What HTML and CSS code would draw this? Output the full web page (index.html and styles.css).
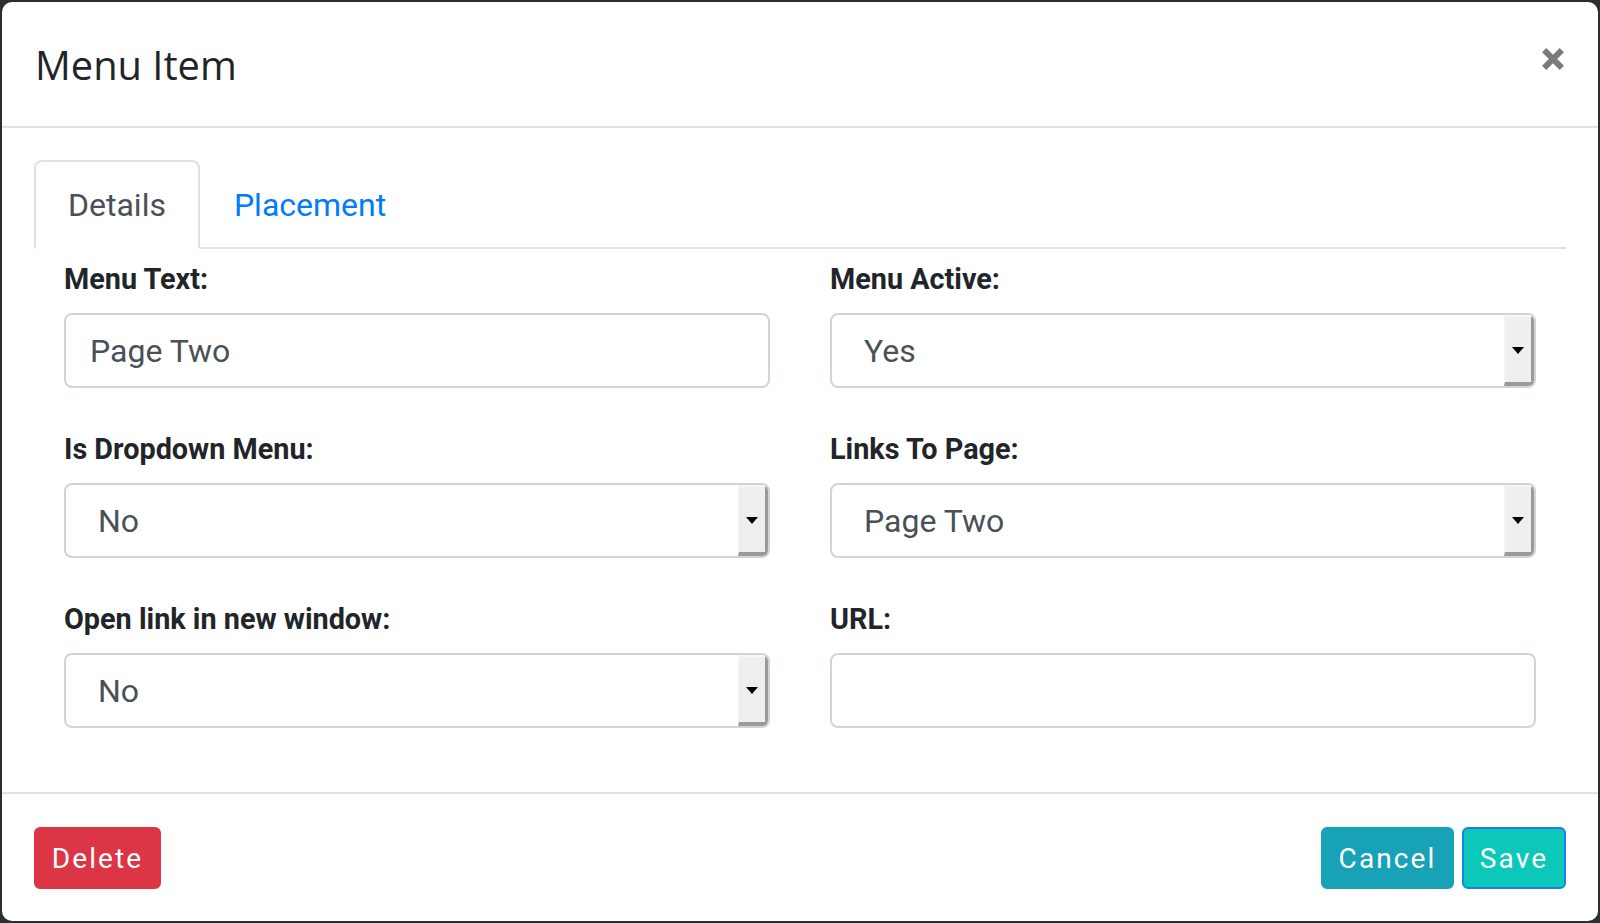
FILE: index.html
```html
<!DOCTYPE html>
<html lang="en">
<head>
<meta charset="utf-8">
<title>Menu Item</title>
<link rel="stylesheet" href="styles.css">
</head>
<body>
<div class="modal">
  <header class="modal-header">
    <h5 class="modal-title">Menu Item</h5>
    <button class="close" type="button" aria-label="Close">
      <svg width="22" height="22" viewBox="0 0 22 22"><path d="M2.2 2.2 L19.8 19.8 M19.8 2.2 L2.2 19.8" stroke="#7b7b7b" stroke-width="6" fill="none"/></svg>
    </button>
  </header>
  <div class="modal-body">
    <nav class="tabs">
      <a class="tab active">Details</a>
      <a class="tab">Placement</a>
    </nav>
    <div class="form-grid">
      <div class="group">
        <label class="label">Menu Text:</label>
        <div class="field">Page Two</div>
      </div>
      <div class="group">
        <label class="label">Menu Active:</label>
        <div class="field select"><span class="sel-text">Yes</span><span class="sel-btn"><span class="tri"></span></span></div>
      </div>
      <div class="group">
        <label class="label">Is Dropdown Menu:</label>
        <div class="field select"><span class="sel-text">No</span><span class="sel-btn"><span class="tri"></span></span></div>
      </div>
      <div class="group">
        <label class="label">Links To Page:</label>
        <div class="field select"><span class="sel-text">Page Two</span><span class="sel-btn"><span class="tri"></span></span></div>
      </div>
      <div class="group">
        <label class="label">Open link in new window:</label>
        <div class="field select"><span class="sel-text">No</span><span class="sel-btn"><span class="tri"></span></span></div>
      </div>
      <div class="group">
        <label class="label">URL:</label>
        <div class="field"></div>
      </div>
    </div>
  </div>
  <footer class="modal-footer">
    <button class="btn btn-danger" type="button">Delete</button>
    <div class="spacer"></div>
    <button class="btn btn-info" type="button">Cancel</button>
    <button class="btn btn-save" type="button">Save</button>
  </footer>
</div>
</body>
</html>
```
FILE: styles.css
```css
html, body {
  margin: 0;
  padding: 0;
}
body {
  background: #2a2f36;
  width: 1600px;
  height: 923px;
  overflow: hidden;
  font-family: Roboto, "Liberation Sans", sans-serif;
  color: #212529;
}
.modal {
  margin: 2px 2px 0 2px;
  width: 1596px;
  height: 919px;
  background: #fff;
  border-radius: 10px;
  display: flex;
  flex-direction: column;
  overflow: hidden;
}
.modal-header {
  box-sizing: border-box;
  height: 126px;
  border-bottom: 2px solid #dee2e6;
  padding: 34px 34px 0 33px;
  display: flex;
  justify-content: space-between;
  align-items: flex-start;
}
.modal-title {
  margin: 0;
  font-family: "Open Sans", "Noto Sans", sans-serif;
  font-weight: 400;
  font-size: 39.8px;
  line-height: 58px;
  color: #212529;
}
.close {
  border: 0;
  background: none;
  padding: 0;
  margin-top: 12px;
  width: 22px;
  height: 22px;
  display: block;
}
.close svg { display: block; }
.modal-body {
  flex: 1;
  padding: 32px 32px 0 32px;
}
.tabs {
  box-sizing: border-box;
  height: 89px;
  border-bottom: 2px solid #dee2e6;
  display: flex;
}
.tab {
  box-sizing: border-box;
  height: 89px;
  margin-bottom: -2px;
  padding: 1px 32px 0 32px;
  border: 2px solid transparent;
  border-radius: 8px 8px 0 0;
  display: flex;
  align-items: center;
  font-size: 32px;
  color: #007bff;
}
.tab.active {
  color: #495057;
  background: #fff;
  border-color: #dee2e6 #dee2e6 #fff;
}
.form-grid {
  margin-top: 11px;
  padding: 0 30px;
  display: grid;
  grid-template-columns: 706px 706px;
  column-gap: 60px;
  row-gap: 42px;
}
.label {
  display: block;
  font-weight: 700;
  font-size: 28.8px;
  line-height: 39px;
  height: 39px;
  margin-bottom: 14px;
  color: #212529;
}
.field {
  box-sizing: border-box;
  height: 75px;
  border: 2px solid #ced4da;
  border-radius: 8px;
  padding-left: 24px;
  display: flex;
  align-items: center;
  font-size: 32px;
  color: #495057;
  overflow: hidden;
}
.field.select {
  padding-left: 32px;
  padding-right: 0;
}
.sel-text {
  flex: 1;
}
.sel-btn {
  box-sizing: border-box;
  width: 30px;
  height: 100%;
  background: #efefef;
  border-top: 2px solid #f7f7f7;
  border-left: 1px solid #f4f4f4;
  border-right: 3px solid #9a9a9a;
  border-bottom: 4px solid #9a9a9a;
  display: flex;
  align-items: center;
  justify-content: center;
}
.tri {
  width: 0;
  height: 0;
  border-left: 6px solid transparent;
  border-right: 6px solid transparent;
  border-top: 7px solid #000;
  margin-top: 2px;
}
.modal-footer {
  border-top: 2px solid #dee2e6;
  padding: 33px 32px 32px 32px;
  display: flex;
  align-items: center;
  gap: 8px;
}
.spacer { flex: 1; }
.btn {
  box-sizing: border-box;
  height: 62px;
  padding: 0 18px;
  border: 2px solid transparent;
  border-radius: 6px;
  font-family: Roboto, "Liberation Sans", sans-serif;
  font-size: 28px;
  letter-spacing: 2.1px;
  color: #fff;
  display: flex;
  align-items: center;
  justify-content: center;
}
.btn-danger {
  background: #dc3545;
  border-color: #dc3545;
  width: 127px;
}
.btn-info {
  background: #17a2b8;
  border-color: #17a2b8;
  width: 133px;
}
.btn-save {
  background: #0cc8b8;
  border-color: #1a7ef5;
  width: 104px;
}
```
